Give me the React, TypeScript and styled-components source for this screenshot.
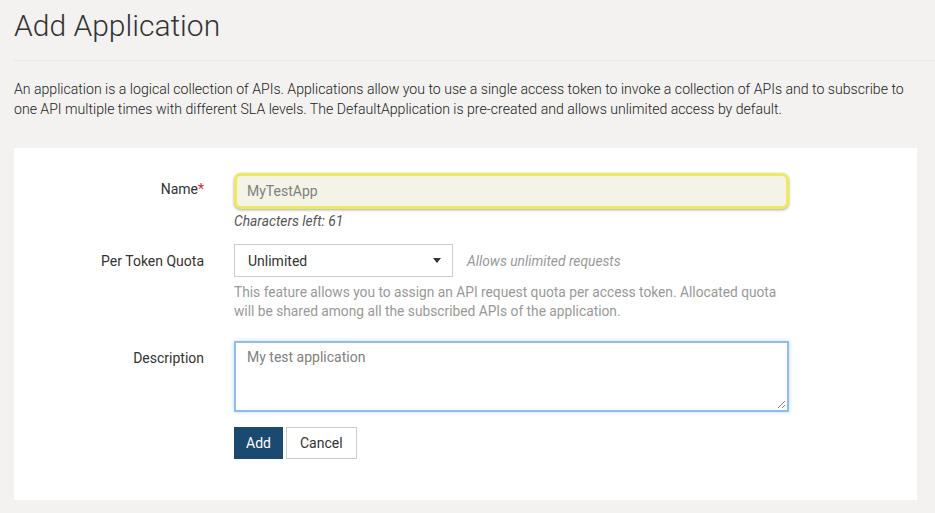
import React from "react";
import styled, { createGlobalStyle } from "styled-components";

const Global = createGlobalStyle`
  html, body { margin: 0; padding: 0; background: #f3f2f0; }
  body { font-family: Roboto, "Liberation Sans", Arial, sans-serif; color: #333; }
  * { box-sizing: border-box; }
`;

const Page = styled.div`
  padding: 0 18px 0 14px;
  height: 513px;
  overflow: hidden;
`;

const Title = styled.h1`
  margin: 0 -18px 0 0;
  padding: 7px 0 15px;
  font-size: 30px;
  font-weight: 300;
  line-height: 38px;
  color: #333;
  border-bottom: 1px solid #e8e7e5;
`;

const Intro = styled.p`
  margin: 19px 0 0;
  font-size: 14.1px;
  font-weight: 300;
  line-height: 19.5px;
  color: #222;
`;

const Card = styled.div`
  margin-top: 29px;
  background: #fff;
  padding: 25px 0 41px;
  display: flex;
  flex-direction: column;
  gap: 15px;
`;

const Row = styled.div<{ $extra?: number }>`
  display: grid;
  grid-template-columns: 190px 555px;
  column-gap: 30px;
  align-items: start;
  margin-top: ${(p) => p.$extra ?? 0}px;
`;

const Label = styled.label<{ $top: number }>`
  text-align: right;
  font-size: 14px;
  color: #333;
  padding-top: ${(p) => p.$top}px;
`;

const Star = styled.span`
  color: #e0262b;
`;

const Field = styled.div`
  display: flex;
  flex-direction: column;
`;

const NameInput = styled.div`
  height: 36px;
  border: 3px solid #eeeb55;
  border-radius: 7px;
  background: #f3f4e7;
  box-shadow: 0 1px 3px rgba(0, 0, 0, 0.35);
  font-size: 14px;
  color: #808080;
  padding: 0 10px;
  display: flex;
  align-items: center;
`;

const Hint = styled.div`
  font-style: italic;
  font-size: 13.8px;
  color: #555;
  margin-top: 4px;
`;

const SelectRow = styled.div`
  display: flex;
  align-items: center;
  gap: 14px;
`;

const Select = styled.div`
  width: 219px;
  height: 33px;
  border: 1px solid #ccc;
  background: #fff;
  display: flex;
  align-items: center;
  justify-content: space-between;
  padding: 0 11px 0 13px;
  font-size: 14px;
  color: #333;
`;

const Caret = styled.span`
  width: 0;
  height: 0;
  border-left: 4px solid transparent;
  border-right: 4px solid transparent;
  border-top: 5px solid #333;
`;

const SideNote = styled.span`
  font-style: italic;
  font-size: 13.8px;
  color: #999;
`;

const Help = styled.div`
  margin-top: 6px;
  font-size: 13.75px;
  line-height: 19px;
  color: #999;
`;

const TextArea = styled.div`
  position: relative;
  height: 71px;
  border: 2px solid #8fbdec;
  box-shadow: 0 0 4px rgba(102, 175, 233, 0.45);
  padding: 6px 11px;
  font-size: 14px;
  color: #808080;
`;

const Grip = styled.svg`
  position: absolute;
  right: 1px;
  bottom: 1px;
`;

const Buttons = styled.div`
  display: flex;
  gap: 3px;
  margin-top: 15px;
`;

const Button = styled.button<{ $primary?: boolean }>`
  height: 32px;
  font-family: inherit;
  font-size: 14px;
  padding: 0 ${(p) => (p.$primary ? 11 : 13)}px;
  border: 1px solid ${(p) => (p.$primary ? "#1a4a70" : "#ccc")};
  background: ${(p) => (p.$primary ? "#1b4a70" : "#fff")};
  color: ${(p) => (p.$primary ? "#fff" : "#333")};
`;

export default function App() {
  return (
    <>
      <Global />
      <Page>
        <Title>Add Application</Title>
        <Intro>
          An application is a logical collection of APIs. Applications allow you to use a single access
          token to invoke a collection of APIs and to subscribe to one API multiple times with different SLA
          levels. The DefaultApplication is pre-created and allows unlimited access by default.
        </Intro>
        <Card>
          <Row>
            <Label $top={8}>
              Name<Star>*</Star>
            </Label>
            <Field>
              <NameInput>MyTestApp</NameInput>
              <Hint>Characters left: 61</Hint>
            </Field>
          </Row>
          <Row>
            <Label $top={9}>Per Token Quota</Label>
            <Field>
              <SelectRow>
                <Select>
                  Unlimited
                  <Caret />
                </Select>
                <SideNote>Allows unlimited requests</SideNote>
              </SelectRow>
              <Help>
                This feature allows you to assign an API request quota per access token. Allocated quota
                <br />
                will be shared among all the subscribed APIs of the application.
              </Help>
            </Field>
          </Row>
          <Row $extra={5}>
            <Label $top={9}>Description</Label>
            <Field>
              <TextArea>
                My test application
                <Grip width="10" height="10" viewBox="0 0 10 10">
                  <path d="M9 2 L2 9 M9 6 L6 9" stroke="#888" strokeWidth="1" />
                </Grip>
              </TextArea>
              <Buttons>
                <Button $primary>Add</Button>
                <Button>Cancel</Button>
              </Buttons>
            </Field>
          </Row>
        </Card>
      </Page>
    </>
  );
}
